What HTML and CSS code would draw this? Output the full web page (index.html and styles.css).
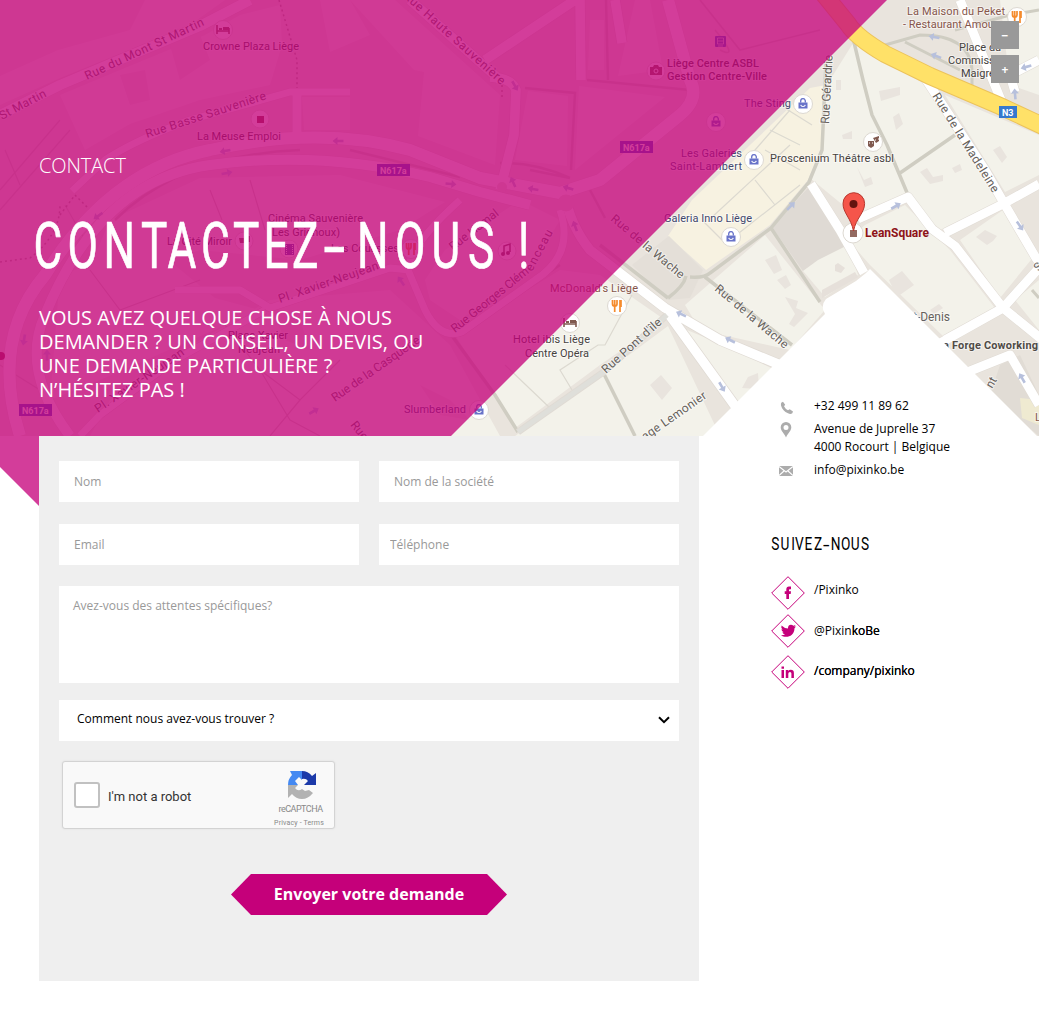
FILE: index.html
```html
<!DOCTYPE html>
<html lang="fr">
<head>
<meta charset="utf-8">
<title>Contactez-nous</title>
<link rel="stylesheet" href="styles.css">
</head>
<body>
<header class="hero">
  <svg class="map" width="1039" height="506" viewBox="0 0 1039 506" aria-hidden="true">
    <defs>
      <clipPath id="mapclip"><rect width="1039" height="436"/></clipPath>
      <g id="bag"><circle r="9.5" class="halo"/><path d="M-4.500-1.500H4.500V4.500H-4.500ZM-2.300-1.500v-2a2.300 2.300 0 0 1 4.600 0v2" fill="#6873c9"/><path d="M-2.300-1.500v-1.500a2.300 2.300 0 0 1 4.600 0v1.500" fill="#fff" stroke="#6873c9" stroke-width="1.300"/><path d="M-2.300 0.800a2.400 2.400 0 0 0 4.600 0" fill="none" stroke="#fff" stroke-width="1.2"/></g>
      <g id="food"><circle r="9.5" class="halo"/><path d="M-4.500-6v4q0 2 2.200 2v6M-2.3-6V0M0-6v4Q0 0-2.3 0M3-6V6M4-6V1" fill="none" stroke="#f58b2c" stroke-width="1.7"/></g>
      <g id="bed"><circle r="9.5" class="halo"/><path d="M-6-5V4M-6 1H6M6-2V4" fill="none" stroke="#805a50" stroke-width="1.6"/><path d="M-4-2h3v2h-3ZM0-3h6v3H0Z" fill="#805a50"/></g>
      <path id="arrow" d="M-5.500 0-0.500-4v2.700h6v2.600h-6V4Z" fill="#b7c0dc"/>
    </defs>
    <g clip-path="url(#mapclip)">
      <rect width="1039" height="436" fill="#e9e4dd"/>
      <g fill="#f3f2ea">
        <path d="M0 76 58 50 130 30 145 0H225L190 25 60 78 0 105ZM60 95 120 70 205 35 240 15 280 5 282 45 270 85 200 100 130 124 85 150ZM320 0H350L370 35 330 52ZM302 97H350V130H304ZM350 0H395L500 95 495 165 418 136 424 72 414 70Z"/>
        <path d="M528 91 568 96 567 166 515 160ZM579 86 665 97 575 170ZM590 20H604V70H588ZM635 0 650 0 663 70 618 76ZM340 175 445 202 400 230 300 260 200 250 140 270 80 290 110 220 200 178ZM60 275 150 245 215 298 260 310 100 380 50 400ZM110 400 200 340 270 300 390 290 450 345 500 436H90Z"/>
        <path d="M520 200 560 220 530 270 460 320 430 300 425 280 445 250ZM455 335 560 270 600 275 665 320 600 365 515 428ZM515 436 602 375 668 326 720 436ZM675 325 735 350 785 375 740 410ZM700 330 685 305 765 235 825 310 790 350Z"/>
        <path d="M830 80 855 40 900 70 935 90 1002 200 940 230 905 195 880 205 855 215 810 178ZM945 95 1039 135V175L1005 192ZM865 225 905 205 950 250 998 312 945 338 870 265 848 240ZM960 240 1003 210 1035 255 1000 298ZM1000 0H1039V95L1010 85ZM1015 300 1039 280V330Z"/>
      </g>
      <g fill="#e9e4de">
        <path d="M879 91 900 87V95L881 101ZM893 117 899 113 903 124 896 130ZM836 80h5v10h-5ZM842 135 852 131V139L843 139ZM857 167 864 180 871 177 873 184 865 187ZM920 172 927 168 933 177 943 175V181L930 184ZM952 168 960 164 962 170 955 173ZM993 150 1000 146 1007 157 1002 163ZM765 260 776 255 782 270 774 274ZM777 280 786 275 791 285 785 289ZM785 297 798 301 796 308 808 313 794 327 789 324 795 314ZM889 280 902 271 914 285 897 297ZM976 237 985 230 997 236 993 241 987 245ZM748 377 758 373 759 389 742 388ZM650 385 661 375 672 388 662 400ZM930 310 939 304 943 308 934 314Z"/>
        <path d="M270 305 300 320 310 350 285 340ZM420 385 450 400 470 420 440 415ZM120 75 145 70 150 100 130 105ZM170 45 200 35 210 60 180 80Z"/>
      </g>
      <path d="M692 200 810 88 826 85 824 138 808 180 770 225 706 270 668 236Z" fill="#f7f2e1"/>
      <path d="M748 158 790 110M710 219 790 145M725 244 800 185M770 130 800 145M755 180 775 205M704 222 722 240M780 105 812 125M765 150 800 170" class="outline"/>
      <path d="M772 227 808 188 850 250 820 260 803 271Z" fill="#dfdad4"/>
      <path d="M803 271 818 260 848 245 858 275 825 297Z" fill="#f3f2ea"/>
      <path d="M835 265 838 263 845 268 841 273 835 271Z" fill="#e6e0da"/><path d="M822 290 855 272 858 277 822 298Z" fill="#e6e0da"/>
      <path d="M669 236 703 270 690 298 668 300 632 265Z" fill="#e4dfd8"/>
      <path d="M1000 365 1020 355 1039 395V436L990 395Z" fill="#e1dcd5"/><path d="M1020 398 1039 400V425L1022 418Z" fill="#efead1"/>
      <!-- footpaths and lanes -->
      <g class="lane">
        <path d="M853 38 863 80 872 115 887 145 908 195M900 173 955 135M820 302 771 228 710 273Q705 278 690 277M771 228 809 182 822 150 826 62M705 277 792 345M686 276Q684 286 668 298M668 298 600 245M603 372 635 436M450 333 495 395 518 432"/>
        <path d="M885 45 920 35Q970 35 972 70V92M905 42 960 70M955 30 1010 15 1039 10M1032 290 1039 298" stroke-width="3"/>
        <path d="M525 88 575 93 571 170M587 80 690 90M606 0 608 80M500 163Q535 162 570 178M590 190 605 218M350 150 460 177M300 150Q180 155 115 220M455 335 560 265M530 170 570 178" stroke-width="2.5"/>
        <path d="M0 210 70 130M0 190 60 120M5 150 20 185M0 365 40 390M225 325 260 370 290 420 320 436M260 370 300 400 340 360M300 400 270 436M90 270 120 310 200 280M65 205 85 240M210 190 222 220M250 180 265 230" stroke-width="1.2"/>
        <path d="M715 30Q740 60 720 50M700 0 740 50 820 30" stroke-width="1.6"/>
      </g>
      <path d="M279 0 297 60V88M502 85V100M60 215 75 195 95 215M0 262 30 258Q60 235 60 205" class="dots"/>
      <path d="M505 365 550 408M632 295 605 345 598 345 560 370 572 390" class="outline"/>
      <!-- main streets -->
      <g class="case">
        <path d="M0 115 60 85 200 26 250 0" stroke-width="11"/><path d="M72 191 105 160Q135 140 190 120L290 92H350" stroke-width="8"/><path d="M297 92V136" stroke-width="10"/>
        <path d="M20 436Q-10 340 45 275 110 170 210 150 320 125 410 150L480 178 560 193 600 180 680 115Q700 98 690 80L668 0" stroke-width="13"/>
        <path d="M70 436Q20 370 45 315 100 180 210 165 320 150 430 177L480 192 530 205" stroke-width="11"/>
        <path d="M500 190 514 135 516 90Q512 78 490 77M575 0 530 30 485 60M580 0 581 80M615 0 622 43M410 0 500 80M565 195Q570 225 590 250L665 308 720 340 785 367M668 313 702 360 738 410" stroke-width="11"/>
        <path d="M560 210Q575 255 535 280L462 332Q440 340 425 310L408 270Q410 245 460 200M175 290H240L270 308 390 268 410 270M80 436 100 415 175 360 265 310" stroke-width="8"/>
        <path d="M925 78 985 170 1005 205 1036 258 1039 262M945 233 1003 204 1039 184M858 219 908 197 932 229 955 246 1003 308 1045 342M1039 268 1003 308 945 340M811 184 840 230 864 273M1005 110 960 0M1015 92 1010 75 1039 60M960 375 1010 355 1039 405M910 360 1003 308" stroke-width="10"/>
        <path d="M518 432 605 371 667 315" stroke-width="7"/>
      </g>
      <g class="street">
        <path d="M0 115 60 85 200 26 250 0" stroke-width="10"/><path d="M72 191 105 160Q135 140 190 120L290 92H350" stroke-width="7"/><path d="M297 92V136" stroke-width="9"/>
        <path d="M20 436Q-10 340 45 275 110 170 210 150 320 125 410 150L480 178 560 193 600 180 680 115Q700 98 690 80L668 0" stroke-width="12"/>
        <path d="M70 436Q20 370 45 315 100 180 210 165 320 150 430 177L480 192 530 205" stroke-width="10"/>
        <path d="M500 190 514 135 516 90Q512 78 490 77M575 0 530 30 485 60M580 0 581 80M615 0 622 43M410 0 500 80M565 195Q570 225 590 250L665 308 720 340 785 367M668 313 702 360 738 410" stroke-width="9.5"/>
        <path d="M560 210Q575 255 535 280L462 332Q440 340 425 310L408 270Q410 245 460 200M175 290H240L270 308 390 268 410 270M80 436 100 415 175 360 265 310" stroke-width="7"/>
        <path d="M925 78 985 170 1005 205 1036 258 1039 262M945 233 1003 204 1039 184M858 219 908 197 932 229 955 246 1003 308 1045 342M1039 268 1003 308 945 340M811 184 840 230 864 273M1005 110 960 0M1015 92 1010 75 1039 60M960 375 1010 355 1039 405M910 360 1003 308" stroke-width="9"/>
        <path d="M518 432 605 371 667 315" stroke-width="5" stroke="#dfdfda"/>
      </g>
      <circle cx="502" cy="187" r="5" fill="#e9e4de"/><circle cx="566" cy="203" r="8.5" fill="#e9e4de"/>
      <path d="M822 -8 848 24Q856 37 885 54L930 76 1000 106 1045 127" fill="none" stroke="#ecc35b" stroke-width="18"/>
      <path d="M822 -8 848 24Q856 37 885 54L930 76 1000 106 1045 127" fill="none" stroke="#ffe168" stroke-width="16"/>
      <use href="#arrow" transform="translate(934 37) rotate(10)"/><use href="#arrow" transform="translate(936 56) rotate(20)"/><use href="#arrow" transform="translate(1015 94) rotate(85)"/><use href="#arrow" transform="translate(1026 67) rotate(-15)"/><use href="#arrow" transform="translate(896 206) rotate(150)"/><use href="#arrow" transform="translate(791 206) rotate(135)"/><use href="#arrow" transform="translate(1020 226) rotate(235)"/><use href="#arrow" transform="translate(730 340) rotate(27)"/><use href="#arrow" transform="translate(722 387) rotate(240)"/><use href="#arrow" transform="translate(681 314) rotate(25)"/><use href="#arrow" transform="translate(1022 378) rotate(60)"/>
      <use href="#arrow" transform="translate(225 151) rotate(-10)"/><use href="#arrow" transform="translate(227 173) rotate(170)"/><use href="#arrow" transform="translate(338 141)"/><use href="#arrow" transform="translate(451 184) rotate(185)"/><use href="#arrow" transform="translate(513 182) rotate(65)"/><use href="#arrow" transform="translate(533 189) rotate(10)"/><use href="#arrow" transform="translate(568 188) rotate(15)"/><use href="#arrow" transform="translate(515 86) rotate(240)"/><use href="#arrow" transform="translate(98 216) rotate(-35)"/><use href="#arrow" transform="translate(24 340) rotate(-80)"/><use href="#arrow" transform="translate(47 355) rotate(90)"/><use href="#arrow" transform="translate(401 281) rotate(55)"/><use href="#arrow" transform="translate(575 226) rotate(70)"/><use href="#arrow" transform="translate(314 411) rotate(150)"/>
      <!-- street names -->
      <g class="label road">
        <text transform="translate(87 80) rotate(-25)" textLength="130">Rue du Mont St Martin</text><text transform="translate(2 120) rotate(-28)" textLength="51">St Martin</text>
        <text transform="translate(147 138) rotate(-18)" textLength="126">Rue Basse Sauvenière</text><text transform="translate(403 -3) rotate(42)" textLength="132">Rue Haute Sauvenière</text>
        <text transform="translate(829 124) rotate(-87)" textLength="69">Rue Gérardrie</text><text transform="translate(932 96) rotate(58)" textLength="115">Rue de la Madeleine</text>
        <text transform="translate(610 220) rotate(40)" textLength="92">Rue de la Wache</text><text transform="translate(714 290) rotate(40)" textLength="92">Rue de la Wache</text>
        <text transform="translate(606 374) rotate(-42)" textLength="76">Rue Pont d'île</text><text transform="translate(645 441) rotate(-35)" textLength="76">age Lemonier</text>
        <text transform="translate(280 303) rotate(-19)" textLength="105">Pl. Xavier-Neujean</text><text transform="translate(98 413) rotate(-34)" textLength="105">Pl. Xavier-Neujean</text>
        <text transform="translate(455 333) rotate(-39)" textLength="96">Rue Georges Clém</text><text transform="translate(532 272) rotate(-62)" textLength="45">enceau</text>
        <text transform="translate(335 402) rotate(-35)" textLength="105">Rue de la Casquette</text><text transform="translate(453 251) rotate(-38)" textLength="59">Rue Hamal</text>
        <text transform="translate(350 425) rotate(52)">Rue</text><text transform="translate(992 389) rotate(-60)">nt</text><text x="913" y="321" textLength="37">t-Denis</text><text transform="translate(1039 272) rotate(-50)">S</text>
      </g>
      <!-- places -->
      <g class="label">
        <text x="203" y="50" textLength="96">Crowne Plaza Liège</text><text x="197" y="140" textLength="84">La Meuse Emploi</text>
        <text x="268" y="222" textLength="95">Cinéma Sauvenière</text><text x="272" y="236" textLength="68">Les Grignoux)</text><text x="167" y="245" textLength="65">La Cité Miroir</text><text x="331" y="252" textLength="68">Les Coulisses</text>
        <text x="228" y="339" textLength="60">Place Xavier</text><text x="238" y="353" textLength="42">Neujean</text>
        <text x="959" y="51">Place du</text><text x="948" y="64">Commissaire</text><text x="961" y="77">Maigret</text>
        <text x="513" y="343" textLength="77">Hotel ibis Liège</text><text x="525" y="357" textLength="64">Centre Opéra</text><text x="770" y="162" textLength="124">Proscenium Théâtre asbl</text>
        <text x="667" y="67" class="bold" textLength="92">Liège Centre ASBL</text><text x="667" y="80" class="bold" textLength="100">Gestion Centre-Ville</text>
      </g>
      <g class="label blue"><text x="744" y="107" textLength="47">The Sting</text><text x="681" y="157" textLength="61">Les Galeries</text><text x="670" y="170" textLength="72">Saint-Lambert</text><text x="664" y="222" textLength="88">Galeria Inno Liège</text><text x="404" y="413" textLength="62">Slumberland</text></g>
      <g class="label brown"><text x="907" y="15" textLength="98">La Maison du Peket</text><text x="903" y="28">- Restaurant Amoureux</text><text x="550" y="292" textLength="88">McDonald's Liège</text><text x="1035" y="421">L</text></g>
      <use href="#bag" x="803" y="104"/><use href="#bag" x="754" y="160"/><use href="#bag" x="731" y="237"/><use href="#bag" x="716" y="122"/><use href="#bag" x="479" y="410"/>
      <use href="#food" x="617" y="306"/><use href="#food" x="1017" y="17"/><use href="#food" x="411" y="249"/><use href="#bed" x="223" y="30"/><use href="#bed" x="570" y="323"/>
      <circle cx="873" cy="142" r="9.5" class="halo"/><path d="M868 141h6v5l-3 2-3-2ZM873 138l6-2v5l-3 2Z" fill="#805a50"/><path d="M869 143h1m2 0h1m2-3h1m2-1h1" stroke="#fff"/>
      <circle cx="260" cy="119" r="9" class="halo"/><path d="M257 116h7v7h-7Z" fill="#8c3d46"/><circle cx="507" cy="251" r="9" class="halo"/><path d="M504 254v-8l6-2v8" fill="none" stroke="#79515a" stroke-width="1.5"/><circle cx="503" cy="254" r="2" fill="#79515a"/><circle cx="508" cy="253" r="2" fill="#79515a"/>
      <circle cx="289" cy="249" r="9" class="halo"/><path d="M285 244h9v11h-9Z" fill="#6259aa"/><path d="M286.5 245v9m6-9v9" stroke="#fff" stroke-dasharray="1 1"/><circle cx="244" cy="241" r="9" class="halo"/><path d="M239 238h5v5h-4ZM244 236h6v6h-3Z" fill="#805a50"/>
      <circle cx="656" cy="71" r="9" class="halo"/><path d="M650 67h3l1-2h4l1 2h3v8h-12Z" fill="#805a50"/><circle cx="656" cy="71" r="2" fill="none" stroke="#fff"/>
      <rect x="715" y="36" width="11" height="11" rx="1" fill="#4a61bf"/><path d="M717.500 38h6v6h-6ZM718 41h5M718 46h5" stroke="#fff" stroke-opacity=".6" fill="none"/>
      <circle cx="1" cy="356" r="4" fill="#97324c"/>
      <g class="shield"><rect x="377" y="164" width="33" height="12" fill="#4a4cbf"/><text x="380" y="174">N617a</text><rect x="620" y="141" width="33" height="12" fill="#4a4cbf"/><text x="623" y="151">N617a</text><rect x="19" y="404" width="33" height="12" fill="#4a4cbf"/><text x="22" y="414">N617a</text><rect x="999" y="106" width="18" height="12" fill="#3679ce"/><text x="1002" y="116">N3</text></g>
      <circle cx="853" cy="233" r="10" class="halo"/><path d="M850 230h7v7h-7Z" fill="#936a61"/><path d="M853.500 231C851 218 843 213 843 203.500a10.800 10.800 0 0 1 21.600 0C864.600 213 856 218 853.500 231Z" fill="#f5554a" stroke="#b7372e"/><circle cx="853.500" cy="204" r="4" fill="#63140f"/>
      <text x="865" y="237" textLength="64" class="lean">LeanSquare</text><text x="937" y="349" textLength="101" class="label forge">La Forge Coworking</text>
    </g>
    <path d="M870 269 1037 436H703L825 314Q820 306 826 299L856 281 866 273Z" fill="#fff"/>
    <path d="M0 0H887L451 436H39V506L0 467Z" fill="#c5007a" fill-opacity=".76"/>
  </svg>
  <div class="intro">
    <p class="crumb">CONTACT</p>
    <h1 class="title"><svg width="520" height="60" viewBox="0 0 520 60"><g class="titletext"><text transform="scale(.68 1)" x="-2.200 47.800 100.700 155.900 194.900 244.100 291.200 336 377.900" y="53">CONTACTEZ</text><text transform="translate(288.500 54) scale(1.200 1)">-</text><text transform="scale(.68 1)" x="473.500 529.400 583.100 636.800 676 710.300" y="53">NOUS !</text></g></svg></h1>
    <p class="lead">VOUS AVEZ QUELQUE CHOSE À NOUS<br>DEMANDER ? UN CONSEIL, UN DEVIS, OU<br>UNE DEMANDE PARTICULIÈRE ?<br>N’HÉSITEZ PAS !</p>
  </div>
  <div class="zoom"><button type="button">−</button><button type="button">+</button></div>
</header>
<main class="content">
  <form class="form">
    <div class="fields">
      <input class="field" placeholder="Nom">
      <input class="field" placeholder="Nom de la société">
      <input class="field" placeholder="Email">
      <input class="field phone" placeholder="Téléphone">
    </div>
    <textarea class="field message" placeholder="Avez-vous des attentes spécifiques?"></textarea>
    <div class="field choice"><span>Comment nous avez-vous trouver ?</span><svg width="12" height="8" viewBox="0 0 12 8"><path d="M1 1.200 6 6.200 11 1.200" fill="none" stroke="#000" stroke-width="2"/></svg></div>
    <div class="captcha">
      <span class="check"></span><span class="robot">I'm not a robot</span>
      <div class="brand">
        <svg width="28" height="28" viewBox="0 0 28 28"><path d="M0 14Q0 8 4 4L2 0H14V9L11 6 7 10 10 14Z" fill="#4489f2"/><path d="M14 0Q20 0 24 5L28 2V14H16L20 10Q18 7 14 8Z" fill="#1c3aa9"/><path d="M0 14H10L7 17Q10 21 14 18L17 20 21 19 25 22Q20 28 14 28 8 28 4 23L0 27Z" fill="#b2b2b2"/></svg>
        <span class="re">reCAPTCHA</span><span class="terms">Privacy - Terms</span>
      </div>
    </div>
    <button class="send" type="button">Envoyer votre demande</button>
  </form>
  <aside class="side">
    <div class="info phone-row"><svg width="14" height="14" viewBox="0 0 14 14"><path d="M1.500 1.500 3 .8 5.200 3.800 4 5.300Q5.300 8 8 9.300L9.700 8.300 13 10.500 12.300 12.300Q10.500 13.500 8 12.300 2.500 10 1 4.500 .6 2.500 1.500 1.500Z" fill="#acacac"/></svg><span>+32 499 11 89 62</span></div>
    <div class="info address"><svg width="14" height="16" viewBox="0 0 14 16"><path fill-rule="evenodd" d="M7 0a5.300 5.300 0 0 1 5.300 5.300C12.300 9 9 11 7 15.500 5 11 1.700 9 1.700 5.300A5.300 5.300 0 0 1 7 0Zm0 3a2.500 2.500 0 1 0 0 5 2.500 2.500 0 0 0 0-5Z" fill="#acacac"/></svg><span>Avenue de Juprelle 37<br>4000 Rocourt | Belgique</span></div>
    <div class="info mail"><svg width="14" height="10" viewBox="0 0 14 10"><path d="M0 0H14V10H0Z" fill="#acacac"/><path d="M0 .5 7 6 14 .5M0 9.500 5 5M14 9.500 9 5" fill="none" stroke="#fff" stroke-width="1.100"/></svg><span>info@pixinko.be</span></div>
    <h2 class="follow"><svg width="110" height="20" viewBox="0 0 110 20"><text transform="scale(.76 1)" x="0.500 12.500 26.500 31.500 44 56.500" y="15">SUIVEZ</text><text transform="translate(52 15.500) scale(1.300 1)">-</text><text transform="scale(.76 1)" x="78.500 92 105 118.500" y="15">NOUS</text></svg></h2>
    <div class="social"><svg class="mark" width="34" height="34" viewBox="0 0 34 34"><path d="M17 .7 33.300 17 17 33.300.7 17Z"/><path class="glyph" d="M15.300 23V18H13.700V15.300H15.300V13.500Q15.300 10.500 18 10.500H20V13.200H18.900Q18 13.200 18 14V15.300H20L19.700 18H18V23Z"/></svg><span>/Pixinko</span></div>
    <div class="social second"><svg class="mark" width="34" height="34" viewBox="0 0 34 34"><path d="M17 .7 33.300 17 17 33.300.7 17Z"/><path class="glyph" d="M10.500 11.500Q13.500 14.500 17 14.500 16.800 11 20 10.800 21.500 10.800 22.300 11.700L24.600 11 23.300 12.800 25 12.500 23.500 14.300C23.500 23 14.500 24.500 10 21.300Q12.500 21.500 14 20.300 12 20 11.400 18.200H12.700Q10.500 17.300 10.400 15.200L11.700 15.500Q9.700 13.500 10.500 11.500Z"/></svg><span>@Pixin<b>koBe</b></span></div>
    <div class="social third"><svg class="mark" width="34" height="34" viewBox="0 0 34 34"><path d="M17 .7 33.300 17 17 33.300.7 17Z"/><path class="glyph" d="M10.500 15H13V23H10.500ZM10.500 11.500H13V13.700H10.500ZM14.800 15H17.200V16Q18 14.800 19.800 14.800 22.900 14.800 22.900 18V23H20.400V18.500Q20.400 17 19 17 17.300 17 17.300 18.800V23H14.800Z"/></svg><span><b>/company/pixinko</b></span></div>
  </aside>
</main>
</body>
</html>
```
FILE: styles.css
```css
* { box-sizing: border-box; }
body { margin: 0; min-height: 1016px; background: #fff; color: #000; font-family: "Open Sans", "Noto Sans", sans-serif; font-size: 12px; }
p, h1, h2 { margin: 0; font-weight: 400; }
svg { display: block; flex: none; }
.hero { position: relative; height: 436px; padding: 154px 0 0 35px; }
.map { position: absolute; left: 0; top: 0; }
.halo { fill: #fff; stroke: #ddd9d2; stroke-width: 1; }
.lane { fill: none; stroke: #cfcdc2; stroke-width: 3.5; }
.outline { fill: none; stroke: #dcd9d0; stroke-width: 1.2; }
.dots { fill: none; stroke: #aaa397; stroke-width: 1.5; stroke-dasharray: 2 3; }
.case { fill: none; stroke: #e0dbd4; stroke-linejoin: round; }
.street { fill: none; stroke: #fff; stroke-linejoin: round; }
.label { font: 11px Roboto, sans-serif; fill: #46423e; stroke: #fff; stroke-width: 2px; stroke-opacity: .5; paint-order: stroke; }
.label.road { font-size: 12px; fill: #66615b; }
.label.blue { fill: #42486e; }
.label.brown { fill: #86564b; }
.bold { font-weight: 500; }
.label.forge { font-weight: 700; fill: #504b47; }
.lean { font: 700 12px Roboto, sans-serif; fill: #8e1318; }
.shield { font: 700 9px Roboto, sans-serif; fill: #fff; }
.intro { position: relative; color: #fff; }
.crumb { padding-left: 4px; font-size: 20px; line-height: 24px; font-weight: 300; letter-spacing: -.1px; }
.title { padding-top: 37px; }
.title svg { overflow: visible; }
.titletext { font: 400 65px Roboto, sans-serif; fill: #fff; stroke: #fff; stroke-width: .7px; }
.lead { padding: 31px 0 0 4px; font-size: 20px; line-height: 24px; }
.zoom { position: absolute; right: 20px; top: 21px; display: flex; flex-direction: column; gap: 6px; }
.zoom button { width: 28px; height: 28px; padding: 0; border: 0; background: #999; color: #fff; font: 700 12px "Open Sans", sans-serif; }
.content { display: flex; padding-left: 39px; }
.form { width: 660px; height: 545px; padding: 25px 20px 0; background: #efefef; }
.fields { display: grid; grid-template-columns: 300px 300px; gap: 22px 20px; }
.field { display: block; width: 100%; height: 41px; padding: 0 15px; border: 0; border-radius: 0; background: #fff; font: 12px "Open Sans", sans-serif; outline: 0; }
.field::placeholder { color: #999; opacity: 1; }
.phone { padding-left: 11px; }
.message { height: 97px; margin-top: 21px; padding: 11px 14px; resize: none; }
.field.choice { display: flex; align-items: center; justify-content: space-between; margin-top: 17px; padding: 0 9px 4px 18px; }
.choice svg { margin-top: 3px; }
.captcha { display: flex; width: 273px; height: 68px; margin: 20px 0 0 3px; padding: 9px 9px 0 11px; border: 1px solid #d3d3d3; border-radius: 3px; background: #f9f9f9; box-shadow: 0 0 2px #ddd; }
.check { width: 26px; height: 26px; margin-top: 11px; border: 2px solid #c1c1c1; border-radius: 3px; background: #fff; }
.robot { margin: 18px 0 0 8px; font: 13px/16px Roboto, sans-serif; color: #333; }
.brand { display: flex; flex-direction: column; align-items: center; width: 52px; margin-left: auto; color: #888; font-family: Roboto, sans-serif; }
.brand svg { margin-left: 6px; }
.re { margin: 5px 0 0 3px; font-size: 9px; line-height: 11px; letter-spacing: -.5px; }
.terms { margin-top: 4px; font-size: 7px; line-height: 9px; letter-spacing: .15px; white-space: nowrap; }
.send { display: block; width: 276px; height: 41px; margin: 45px 0 0 172px; border: 0; padding: 0 0 2px; background: #c5007a; color: #fff; font: 700 16px "Open Sans", sans-serif; clip-path: polygon(0 50%, 20px 0, 256px 0, 100% 50%, 256px 100%, 20px 100%); }
.side { position: relative; width: 230px; margin: -39px 0 0 72px; }
.info { display: flex; line-height: 18px; }
.info svg { margin: 4px 20px 0 9px; }
.address { margin-top: 5px; }
.address svg { margin: 2px 20px 0 8px; }
.address span { margin-left: 1px; }
.mail { margin-top: 5px; }
.mail svg { margin: 5px 20px 0 8px; }
.mail span { margin-left: 1px; }
.follow { margin-top: 56px; font: 400 18px Roboto, sans-serif; }
.social { display: flex; margin-top: 21px; line-height: 18px; }
.social span { margin: 5px 0 0 9px; }
.second { margin-top: 4px; }
.second span { margin-top: 8px; }
.third { margin-top: 7px; }
.third span { margin-top: 7px; }
.social b { font-weight: 400; text-shadow: 0 0 .6px #000; }
.mark path { fill: none; stroke: #c5007a; stroke-width: 1; }
.mark .glyph { fill: #c5007a; stroke: none; }
```
